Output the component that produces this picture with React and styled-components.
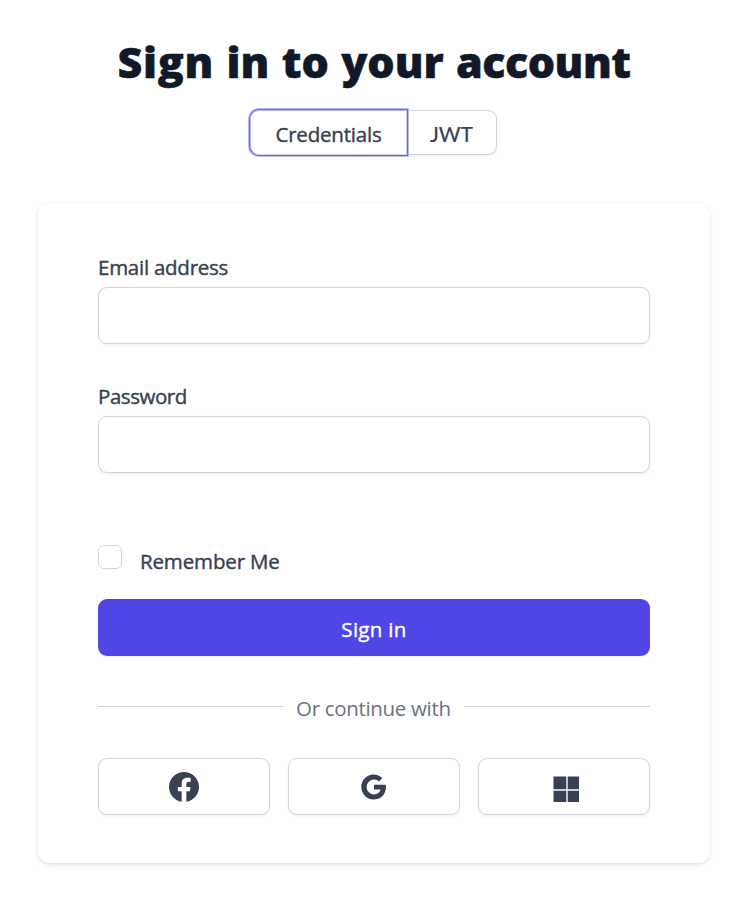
import React from 'react';
import styled, { createGlobalStyle, css } from 'styled-components';

const GlobalStyle = createGlobalStyle`
  *, *::before, *::after { box-sizing: border-box; }
  body {
    margin: 0;
    background: #fff;
    color: #374151;
    font-family: "Open Sans", "Noto Sans", sans-serif;
    font-size: 20.5px;
    line-height: 30px;
    font-weight: 500;
  }
  button, input { font: inherit; color: inherit; }
`;

const Page = styled.main`
  display: flex;
  flex-direction: column;
  align-items: center;
  height: 897px;
  padding: 35px 0 0 4px;
`;

const Title = styled.h1`
  margin: 0;
  color: #111827;
  font-size: 43px;
  line-height: 54px;
  font-weight: 800;
  white-space: nowrap;
  letter-spacing: -0.1px;
  word-spacing: 1.5px;
  -webkit-text-stroke: 0.5px #111827;
`;

const Word = styled.span`
  letter-spacing: ${(p) => p.$tracking};
`;

const outlined = css`
  border: 1px solid #d1d5db;
  background: #fff;
  box-shadow: 0 1.5px 3px rgba(0, 0, 0, 0.05);
`;

const Tabs = styled.div`
  display: flex;
  width: 247px;
  height: 45px;
  margin: 21px 1px 0 0;
`;

const Tab = styled.button`
  ${outlined}
  width: ${(p) => p.$width};
  height: 45px;
  padding: 3px 0 0;
  line-height: 30px;
  border-radius: ${(p) => (p.$active ? '9px 0 0 9px' : '0 9px 9px 0')};
  ${(p) => p.$active && css`
    border-color: #b9baf5 #d1d5db #d1d5db #b9baf5;
    box-shadow: 0 0 0 1px #6366f1, 0 0 0 2px #b9baf8;
    z-index: 1;
  `}
  ${(p) => !p.$active && css`border-left: 0;`}
`;

const Label = styled.span`
  display: inline-block;
  white-space: nowrap;
  letter-spacing: ${(p) => p.$tracking || '0'};
  -webkit-text-stroke: 0.4px currentColor;
`;

const ShortLabel = styled.span`
  font-family: Lato, "Open Sans", sans-serif;
  font-weight: 400;
  -webkit-text-stroke: 0.2px currentColor;
  font-size: 21px;
`;

const Card = styled.form`
  width: 672px;
  height: 660px;
  margin-top: 48px;
  padding: 48px 60px;
  border-radius: 12px;
  background: #fff;
  box-shadow: 0 1.5px 4.5px rgba(0, 0, 0, 0.1), 0 1.5px 3px -1.5px rgba(0, 0, 0, 0.06);
`;

const Field = styled.label`
  display: flex;
  flex-direction: column;
  align-items: flex-start;
  height: 93px;
  margin-bottom: 36px;
  padding-top: 1px;
`;

const TextInput = styled.input`
  ${outlined}
  width: 100%;
  height: 57px;
  margin-top: 5px;
  padding: 12px 18px;
  border-radius: 9px;
  outline: none;
`;

const Remember = styled.label`
  display: flex;
  gap: 18px;
  height: 54px;
  margin-top: 72px;
`;

const Checkbox = styled.input`
  appearance: none;
  width: 24px;
  height: 24px;
  margin: 0;
  border: 1px solid #d1d5db;
  border-radius: 6px;
  background: #fff;
`;

const RememberText = styled.span`
  padding-top: 1px;
`;

const Submit = styled.button`
  width: 100%;
  height: 57px;
  padding: 2px 0 0;
  border: 0;
  border-radius: 9px;
  background: #4f46e5;
  color: #fff;
  box-shadow: 0 1.5px 3px rgba(0, 0, 0, 0.05);
`;

const Divider = styled.div`
  display: flex;
  align-items: center;
  gap: 12px;
  height: 29px;
  margin-top: 36px;
  color: #6b7280;
  font-weight: 400;

  &::before, &::after {
    content: "";
    flex: 1;
    height: 1px;
    background: #d1d5db;
  }
`;

const DividerText = styled.span`
  width: 155px;
  height: 27px;
  margin-right: 1px;
  white-space: nowrap;
  letter-spacing: -0.32px;
`;

const Providers = styled.div`
  display: grid;
  grid-template-columns: repeat(3, 1fr);
  gap: 18px;
  margin-top: 37px;
`;

const Provider = styled.button`
  ${outlined}
  display: flex;
  align-items: center;
  justify-content: center;
  height: 57px;
  padding: 0;
  border-radius: 9px;
  color: #374151;

  svg { display: block; width: 30px; height: 30px; fill: currentColor; }
`;

const FacebookIcon = () => (
  <svg viewBox="0 0 20 20" aria-hidden="true">
    <path fillRule="evenodd" d="M20 10c0-5.523-4.477-10-10-10S0 4.477 0 10c0 4.991 3.657 9.128 8.438 9.878v-6.987h-2.54V10h2.54V7.797c0-2.506 1.492-3.89 3.777-3.89 1.094 0 2.238.195 2.238.195v2.46h-1.26c-1.243 0-1.63.771-1.63 1.562V10h2.773l-.443 2.89h-2.33v6.988C16.343 19.128 20 14.991 20 10z" />
  </svg>
);

const GoogleIcon = () => (
  <svg viewBox="0 0 30 30" aria-hidden="true">
    <path d="M15 12.8v4.7h6.7c-.9 2.9-3.3 4.9-6.7 4.9a7.4 7.4 0 1 1 4.85-13l3.5-3.5A12.5 12.5 0 1 0 15 27.5c10.4 0 12.7-9.7 11.7-14.7z" />
  </svg>
);

const MicrosoftIcon = () => (
  <svg viewBox="0 0 30 30" aria-hidden="true">
    <path d="M4.5 4.5h12.8v12.8H4.5zM18.7 4.5H30v12.8H18.7zM4.5 18.7h12.8V30H4.5zM18.7 18.7H30V30H18.7z" />
  </svg>
);

export default function App() {
  return (
    <>
      <GlobalStyle />
      <Page>
        <Title>
          <Word $tracking="0.7px">Sign</Word> in to your <Word $tracking="-0.5px">account</Word>
        </Title>
        <Tabs>
          <Tab type="button" $active $width="157px"><Label $tracking="-0.2px">Credentials</Label></Tab>
          <Tab type="button" $width="90px"><ShortLabel>JWT</ShortLabel></Tab>
        </Tabs>
        <Card onSubmit={(e) => e.preventDefault()}>
          <Field>
            <Label $tracking="-0.25px">Email address</Label>
            <TextInput type="email" />
          </Field>
          <Field>
            <Label $tracking="-0.45px">Password</Label>
            <TextInput type="password" />
          </Field>
          <Remember>
            <Checkbox type="checkbox" />
            <RememberText><Label $tracking="-0.15px">Remember Me</Label></RememberText>
          </Remember>
          <Submit type="submit"><Label $tracking="0.3px">Sign in</Label></Submit>
          <Divider><DividerText>Or continue with</DividerText></Divider>
          <Providers>
            <Provider type="button" aria-label="Facebook"><FacebookIcon /></Provider>
            <Provider type="button" aria-label="Google"><GoogleIcon /></Provider>
            <Provider type="button" aria-label="Microsoft"><MicrosoftIcon /></Provider>
          </Providers>
        </Card>
      </Page>
    </>
  );
}
